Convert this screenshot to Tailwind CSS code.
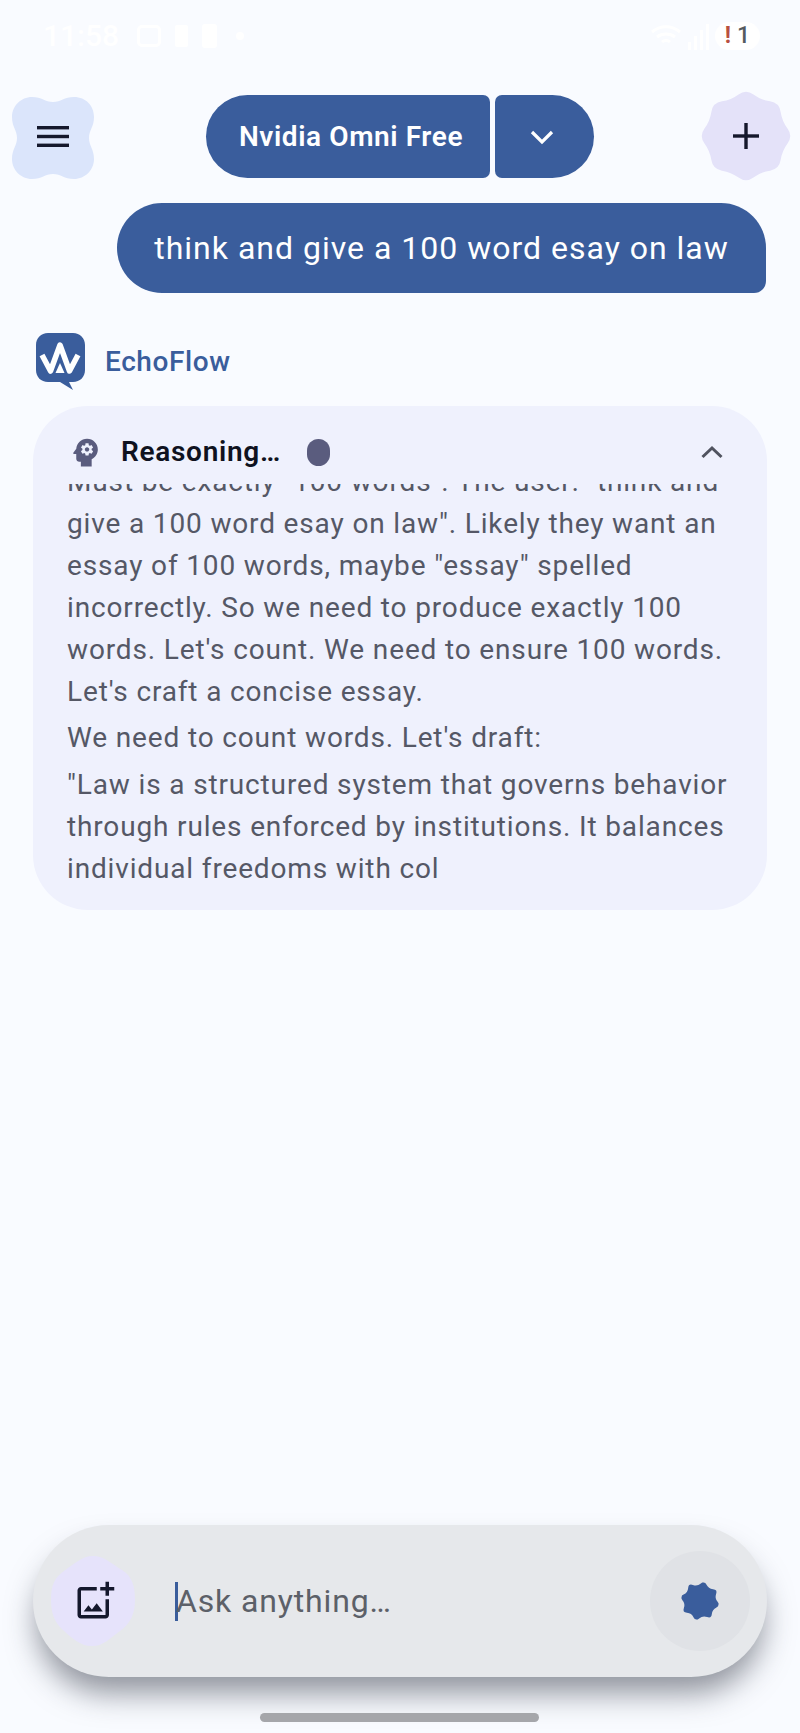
<!DOCTYPE html>
<html lang="en">
<head>
<meta charset="utf-8">
<title>EchoFlow</title>
<script src="https://cdn.jsdelivr.net/npm/@tailwindcss/browser@4"></script>
</head>
<body class="m-0">
<div class="w-[800px] h-[1733px] flex flex-col bg-[#f9fbff] overflow-hidden font-['Roboto',sans-serif]">

  <!-- status bar -->
  <div class="h-[91px] shrink-0 flex items-start pt-[22px] pl-[43px] pr-[40px]">
    <span class="text-[30px] leading-[28px] font-medium text-white">11:58</span>
    <div class="flex items-center gap-[14px] ml-[18px] h-[28px]">
      <div class="w-[24px] h-[22px] rounded-[5px] border-[3px] border-white"></div>
      <div class="w-[13px] h-[22px] rounded-[2px] bg-white"></div>
      <div class="w-[15px] h-[24px] rounded-[3px] bg-white"></div>
      <div class="w-[8px] h-[8px] rounded-full bg-white ml-[5px]"></div>
    </div>
    <div class="ml-auto flex items-center gap-[6px] h-[28px]">
      <svg width="32" height="24" viewBox="0 0 32 24" fill="none" stroke="#ffffff" stroke-width="3"><path d="M2 8 C10 1 22 1 30 8 M7 13 C12 9 20 9 25 13 M12 18 C14 16 18 16 20 18"/></svg>
      <div class="flex items-end gap-[3px] h-[28px]">
        <div class="w-[3px] h-[8px] bg-white"></div>
        <div class="w-[3px] h-[14px] bg-white"></div>
        <div class="w-[3px] h-[20px] bg-white"></div>
        <div class="w-[3px] h-[26px] bg-white"></div>
      </div>
      <div class="w-[45px] h-[28px] rounded-full bg-white flex items-center justify-center gap-[6px] text-[23px] leading-[28px] font-medium">
        <span class="text-[#b8503f] font-bold">!</span><span class="text-[#555a60]">1</span>
      </div>
    </div>
  </div>

  <!-- top bar -->
  <div class="h-[90px] shrink-0 flex items-center pl-[12px] pr-[9px]">
    <button class="relative w-[82px] h-[82px] mt-[3px] flex items-center justify-center">
      <svg class="absolute inset-0" width="82" height="82" viewBox="0 0 82 82"><path fill="#dbe5fb" d="M20 0C30 0 33 5 41 5C49 5 52 0 62 0C74 0 82 9 82 20C82 30 77 33 77 41C77 49 82 52 82 62C82 73 73 82 62 82C52 82 49 77 41 77C33 77 30 82 20 82C9 82 0 73 0 62C0 52 5 49 5 41C5 33 0 30 0 20C0 9 9 0 20 0Z"/></svg>
      <svg class="relative -mt-[3px]" width="32" height="21" viewBox="0 0 32 21" fill="#14182c"><rect y="0" width="32" height="3.4"/><rect y="8.8" width="32" height="3.4"/><rect y="17.6" width="32" height="3.4"/></svg>
    </button>

    <div class="ml-[112px] mt-[1px] flex h-[83px] gap-[5px]">
      <div class="w-[284px] h-full bg-[#3a5d9c] rounded-l-[42px] rounded-r-[7px] flex items-center justify-center pl-[6px] text-white text-[28px] tracking-[0.6px] font-semibold leading-none">Nvidia Omni Free</div>
      <div class="w-[99px] h-full bg-[#3a5d9c] rounded-r-[42px] rounded-l-[7px] flex items-center justify-center pr-[5px]">
        <svg width="24" height="16" viewBox="0 0 24 16" fill="none" stroke="#ffffff" stroke-width="3.2"><path d="M2 3L12 13L22 3"/></svg>
      </div>
    </div>

    <button class="relative ml-auto w-[90px] h-[90px] flex items-center justify-center">
      <svg class="absolute inset-0" width="90" height="90" viewBox="0 0 90 90"><path fill="#e4e2f9" d="M37.54 3.49Q45 -2 52.46 3.49Q59.92 8.97 69.08 10.37Q78.23 11.77 79.63 20.93Q81.03 30.08 86.52 37.54Q92 45 86.52 52.46Q81.03 59.92 79.63 69.08Q78.23 78.23 69.08 79.63Q59.92 81.03 52.46 86.52Q45 92 37.54 86.52Q30.08 81.03 20.93 79.63Q11.77 78.23 10.37 69.08Q8.97 59.92 3.49 52.46Q-2 45 3.49 37.54Q8.97 30.08 10.37 20.93Q11.77 11.77 20.93 10.37Q30.08 8.97 37.54 3.49Z"/></svg>
      <svg class="relative" width="26" height="26" viewBox="0 0 26 26" fill="#14182c"><rect x="11.3" y="0" width="3.4" height="26"/><rect x="0" y="11.3" width="26" height="3.4"/></svg>
    </button>
  </div>

  <!-- user message -->
  <div class="mt-[22px] ml-[117px] w-[649px] h-[90px] shrink-0 bg-[#3a5d9c] rounded-[45px] rounded-br-[12px] flex items-center justify-center text-white text-[32px] tracking-[1px] leading-none">think and give a 100 word esay on law</div>

  <!-- assistant label -->
  <div class="mt-[40px] ml-[36px] h-[57px] shrink-0 flex items-center gap-[19px]">
    <svg width="50" height="57" viewBox="0 0 50 57">
      <path fill="#3a5d9c" d="M12 0H37C44 0 49 5 49 12V37C49 44 44 49 37 49H33L37 57L24 49H12C5 49 0 44 0 37V12C0 5 5 0 12 0Z"/>
      <polyline fill="none" stroke="#ffffff" stroke-width="5.5" stroke-linejoin="round" points="6,22 14.5,38 24,12 33.5,38 42,22"/>
      <polygon fill="#ffffff" points="24,30 19.5,40 28.5,40"/>
    </svg>
    <span class="text-[#3a5d9c] text-[28px] tracking-[0.6px] leading-none font-medium">EchoFlow</span>
  </div>

  <!-- reasoning card -->
  <div class="mt-[16px] ml-[33px] w-[734px] h-[504px] shrink-0 bg-[#eff1fd] rounded-[55px] pt-[26px] pb-[21px] flex flex-col">
    <div class="h-[40px] shrink-0 flex items-center pl-[34px] pr-[44px]">
      <svg width="37" height="37" viewBox="0 0 24 24" fill="#5a5c7e">
        <path d="M13 8.57c-.79 0-1.43.64-1.43 1.43s.64 1.43 1.43 1.43 1.43-.64 1.43-1.43-.64-1.43-1.43-1.43z"/>
        <path d="M13 3C9.25 3 6.2 5.94 6.02 9.64L4.1 12.2c-.25.33-.01.8.4.8H6v3c0 1.1.9 2 2 2h1v3h7v-4.68c2.36-1.12 4-3.53 4-6.32 0-3.87-3.13-7-7-7zm3 7c0 .13-.01.26-.02.39l.83.66c.08.06.1.16.05.25l-.8 1.39c-.05.09-.16.12-.24.09l-.99-.4c-.21.16-.43.29-.67.39L14 13.83c-.01.1-.1.17-.2.17h-1.6c-.1 0-.18-.07-.2-.17l-.15-1.06c-.25-.1-.47-.23-.68-.39l-.99.4c-.09.03-.2 0-.25-.09l-.8-1.39c-.05-.08-.03-.19.05-.25l.84-.66c-.01-.13-.02-.26-.02-.39s.02-.27.04-.39l-.85-.66c-.08-.06-.1-.16-.05-.26l.8-1.38c.05-.09.15-.12.24-.09l1 .4c.2-.15.43-.29.67-.39L12 6.17c.02-.1.1-.17.2-.17h1.6c.1 0 .18.07.2.17l.15 1.06c.24.1.46.23.67.39l1-.4c.09-.03.2 0 .24.09l.8 1.38c.05.09.03.2-.05.26l-.85.66c.03.12.04.25.04.39z"/>
      </svg>
      <span class="ml-[17px] text-[28px] leading-none font-semibold text-[#0f1220] tracking-[0.7px]">Reasoning…</span>
      <div class="ml-[26px] w-[23px] h-[27px] rounded-full bg-[#5a5c7e]"></div>
      <svg class="ml-auto" width="22" height="14" viewBox="0 0 22 14" fill="none" stroke="#50535f" stroke-width="3"><path d="M1.5 12L11 3L20.5 12"/></svg>
    </div>
    <div class="mt-[12px] flex-1 overflow-hidden pl-[34px] pr-[32px] text-[28px] tracking-[0.85px] leading-[42px] text-[#555866]">
      <p class="-mt-[23px]">Must be exactly "100 words". The user: "think and give a 100 word esay on law". Likely they want an essay of 100 words, maybe "essay" spelled incorrectly. So we need to produce exactly 100 words. Let's count. We need to ensure 100 words. Let's craft a concise essay.</p>
      <p class="mt-[4px]">We need to count words. Let's draft:</p>
      <p class="mt-[5px]">"Law is a structured system that governs behavior through rules enforced by institutions. It balances individual freedoms with col</p>
    </div>
  </div>

  <!-- input -->
  <div class="mt-auto mb-[36px] ml-[33px] w-[734px] h-[152px] shrink-0 bg-[#e6e8eb] rounded-[76px] flex items-center pl-[17px] pr-[17px] shadow-[0_20px_30px_-4px_rgba(40,45,60,0.5)]">
    <button class="relative w-[85px] h-[90px] shrink-0 flex items-center justify-center">
      <svg class="absolute inset-0" width="85" height="90" viewBox="0 0 85 90"><path fill="#e6e3fb" d="M43 0C54 0 62 8 72 14C82 20 85 30 85 44C85 58 80 68 70 75C60 82 54 90 42 90C30 90 22 82 13 74C4 66 1 56 1 44C1 30 4 22 14 15C24 8 32 0 43 0Z"/></svg>
      <svg class="relative ml-[4px]" width="42" height="42" viewBox="0 0 24 24" fill="#14182c"><path d="M18 20H4V6h9V4H4c-1.1 0-2 .9-2 2v14c0 1.1.9 2 2 2h14c1.1 0 2-.9 2-2v-9h-2v9zm-7.79-3.17l-1.96-2.36L5.5 18h11l-3.54-4.71zM20 4V1h-2v3h-3c.01.01 0 2 0 2h3v2.99c.01.01 2 0 2 0V6h3V4h-3z"/></svg>
    </button>
    <div class="ml-[40px] w-[3px] h-[39px] bg-[#3a5d9c] shrink-0"></div>
    <span class="text-[32px] tracking-[0.85px] leading-none text-[#5c6068] -ml-[2px]">Ask anything…</span>
    <button class="ml-auto w-[100px] h-[100px] shrink-0 rounded-full bg-[#e0e2e6] flex items-center justify-center">
      <svg class="rotate-[12deg]" width="38" height="38" viewBox="0 0 90 90"><path fill="#3a5d9c" d="M38.3 3.83Q45 -5 51.7 3.83Q58.39 12.66 69.38 11.15Q80.36 9.64 78.85 20.63Q77.34 31.61 86.17 38.3Q95 45 86.17 51.7Q77.34 58.39 78.85 69.38Q80.36 80.36 69.38 78.85Q58.39 77.34 51.7 86.17Q45 95 38.3 86.17Q31.61 77.34 20.63 78.85Q9.64 80.36 11.15 69.38Q12.66 58.39 3.83 51.7Q-5 45 3.83 38.3Q12.66 31.61 11.15 20.63Q9.64 9.64 20.63 11.15Q31.61 12.66 38.3 3.83Z"/></svg>
    </button>
  </div>

  <!-- home indicator -->
  <div class="mb-[11px] ml-[260px] w-[279px] h-[9px] shrink-0 rounded-full bg-[#a5a6aa]"></div>
</div>
</body>
</html>
